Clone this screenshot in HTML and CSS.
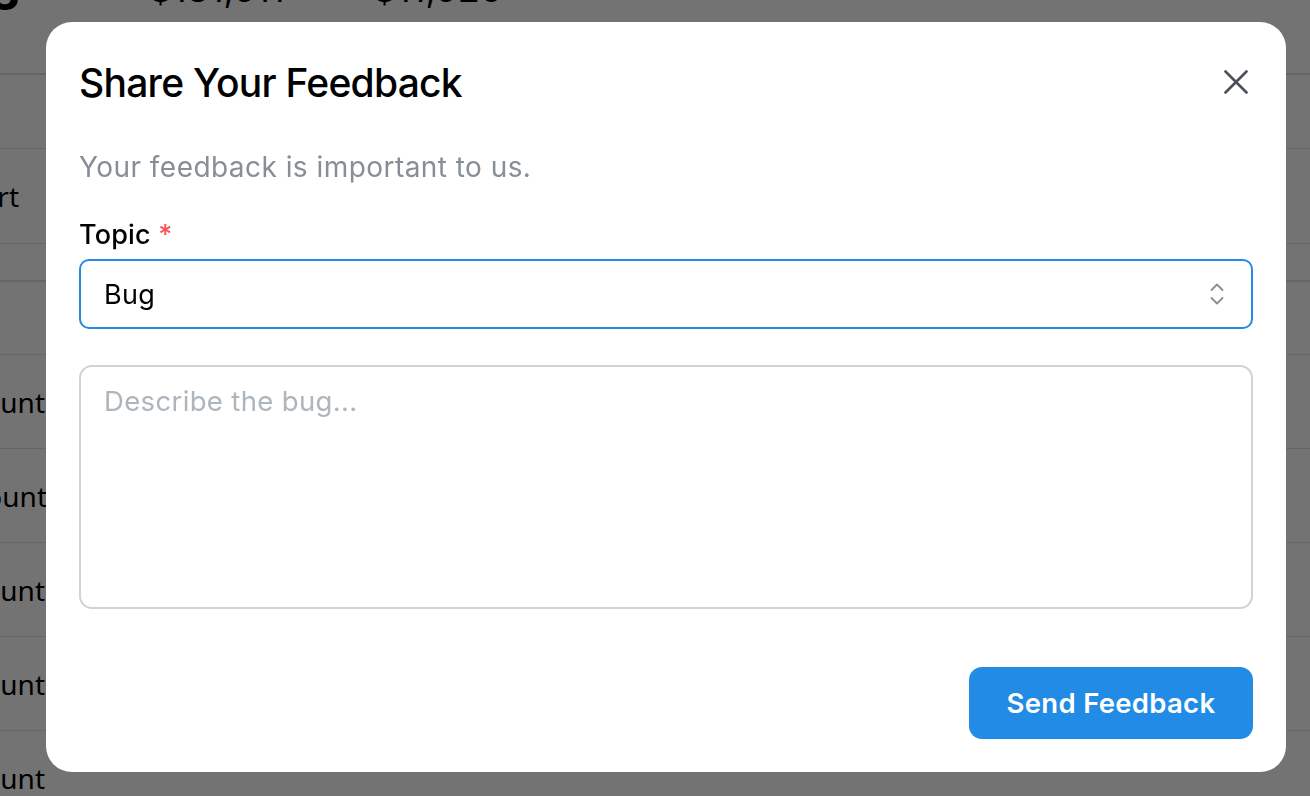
FILE: index.html
```html
<!DOCTYPE html>
<html lang="en">
<head>
<meta charset="utf-8">
<title>Share Your Feedback</title>
<link rel="stylesheet" href="styles.css">
</head>
<body>
<div class="page">
  <div class="stats">
    <div class="stat-big">3</div>
    <div class="stat">$131,511</div>
    <div class="stat stat-2">$11,926</div>
  </div>
  <div class="row row-a"></div>
  <div class="row row-b"><span class="cell cell-short">Report</span></div>
  <div class="row row-c"></div>
  <div class="row row-d"></div>
  <div class="row"><span class="cell">Amount</span></div>
  <div class="row"><span class="cell cell-wide">Account</span></div>
  <div class="row"><span class="cell">Amount</span></div>
  <div class="row"><span class="cell">Amount</span></div>
  <div class="row"><span class="cell">Amount</span></div>
</div>

<div class="overlay">
  <section class="modal" role="dialog" aria-labelledby="mtitle">
    <header class="modal-header">
      <h2 id="mtitle" class="modal-title">Share Your Feedback</h2>
      <button class="close" aria-label="Close">
        <svg width="24" height="24" viewBox="0 0 24 24" fill="none" stroke="currentColor" stroke-width="2.6" stroke-linecap="round">
          <path d="M1.5 1.5 L22.5 22.5 M22.5 1.5 L1.5 22.5"/>
        </svg>
      </button>
    </header>
    <div class="modal-body">
      <p class="subtitle">Your feedback is important to us.</p>
      <label class="label">Topic <span class="req">*</span></label>
      <div class="select">
        <span class="select-value">Bug</span>
        <svg class="chev" width="14" height="24" viewBox="0 0 14 24" fill="none" stroke="currentColor" stroke-width="1.8" stroke-linecap="round" stroke-linejoin="round">
          <path d="M1.5 8 L7 2.5 L12.5 8"/>
          <path d="M1.5 16 L7 21.5 L12.5 16"/>
        </svg>
      </div>
      <textarea class="textarea" placeholder="Describe the bug..."></textarea>
      <div class="actions">
        <button class="btn">Send Feedback</button>
      </div>
    </div>
  </section>
</div>
</body>
</html>
```

FILE: styles.css
```css
* { box-sizing: border-box; }
html, body { margin: 0; padding: 0; }
body {
  width: 1310px;
  height: 796px;
  overflow: hidden;
  background: #fff;
  font-family: Inter, "Noto Sans", sans-serif;
  color: #000;
}

/* background page */
.page {
  width: 1310px;
}
.stats {
  display: flex;
  align-items: flex-start;
  margin-top: -31px;
  height: 106px;
  border-bottom: 2px solid #dee2e6;
}
.stat-big {
  width: 152px;
  font-size: 46px;
  font-weight: 700;
  margin-left: -10px;
  line-height: 48px;
}
.stat {
  width: 224px;
  line-height: 40px;
  font-size: 36px;
  margin-left: 7px;
  margin-right: -7px;
}
.row {
  height: 94px;
  border-bottom: 1px solid #dee2e6;
  display: flex;
  align-items: center;
}
.row-a { height: 74px; }
.row-b { height: 95px; }
.row-c { height: 38px; border-bottom-width: 2px; }
.row-d { height: 73px; }
.cell {
  width: 45px;
  display: flex;
  justify-content: flex-end;
  overflow: hidden;
  white-space: nowrap;
  font-family: "Noto Sans", sans-serif;
  font-size: 28px;
}
.cell-wide { width: 47px; }
.cell-short { width: 19px; }

/* overlay */
.overlay {
  position: fixed;
  inset: 0;
  background: rgba(0, 0, 0, 0.55);
  display: flex;
  align-items: flex-start;
  padding: 22px 0 0 46px;
}
.modal {
  width: 1240px;
  height: 750px;
  background: #fff;
  border-radius: 26px;
  display: flex;
  flex-direction: column;
}
.modal-header {
  height: 120px;
  padding: 0 33px;
  display: flex;
  align-items: center;
  justify-content: space-between;
}
.modal-title {
  margin: 3px 0 0;
  font-size: 39px;
  font-weight: 500;
  line-height: 1.2;
  letter-spacing: -0.75px;
}
.close {
  border: 0;
  background: none;
  padding: 0;
  width: 24px;
  height: 24px;
  color: #495057;
  margin-right: 5px;
  display: flex;
}
.modal-body {
  padding: 0 33px 33px;
  display: flex;
  flex-direction: column;
  flex: 1;
}
.subtitle {
  margin: 5px 0 0;
  font-size: 28px;
  line-height: 40px;
  letter-spacing: 0.45px;
  color: #868e96;
}
.label {
  margin-top: 28px;
  font-size: 27px;
  line-height: 40px;
  font-weight: 500;
  letter-spacing: 0.2px;
}
.req { color: #fa5252; }
.select {
  margin-top: 4px;
  height: 70px;
  border: 2px solid #228be6;
  border-radius: 10px;
  display: flex;
  align-items: center;
  justify-content: space-between;
  padding: 0 27px 0 23px;
  font-size: 27px;
  letter-spacing: 0.3px;
}
.chev { color: #868e96; }
.textarea {
  margin-top: 36px;
  height: 244px;
  border: 2px solid #ced4da;
  border-radius: 13px;
  padding: 14px 23px;
  font-family: Inter, "Noto Sans", sans-serif;
  font-size: 27.5px;
  letter-spacing: 0.35px;
  line-height: 40px;
  resize: none;
  outline: none;
}
.textarea::placeholder { color: #adb5bd; }
.actions {
  margin-top: auto;
  display: flex;
  justify-content: flex-end;
}
.btn {
  height: 72px;
  width: 284px;
  border: 0;
  border-radius: 13px;
  background: #228be6;
  color: #fff;
  font-family: Inter, "Noto Sans", sans-serif;
  font-size: 27.5px;
  font-weight: 600;
  letter-spacing: 0.3px;
}
```
